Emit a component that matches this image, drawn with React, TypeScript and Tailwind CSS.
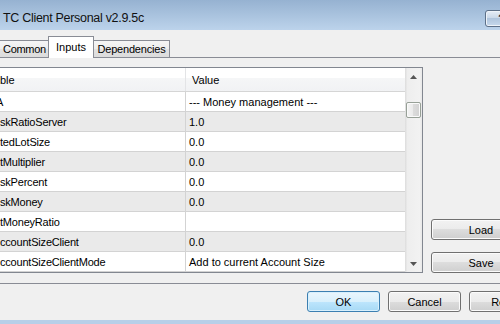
import React from "react";

const rows: [string, string, number?][] = [
  ["A", "--- Money management ---", -4],
  ["skRatioServer", "1.0"],
  ["tedLotSize", "0.0"],
  ["tMultiplier", "0.0"],
  ["skPercent", "0.0"],
  ["skMoney", "0.0"],
  ["tMoneyRatio", ""],
  ["ccountSizeClient", "0.0"],
  ["ccountSizeClientMode", "Add to current Account Size"],
];

function Arrow({ down }: { down?: boolean }) {
  return (
    <svg width="7" height="4" viewBox="0 0 7 4">
      <polygon points={down ? "0,0 7,0 3.5,4" : "0,4 7,4 3.5,0"} fill="#555" />
    </svg>
  );
}

const btn =
  "h-[21px] shrink-0 flex items-center justify-center rounded-[3px] border border-[#707070] shadow-[inset_0_0_0_1px_#fbfbfb] bg-[linear-gradient(to_bottom,#f2f2f2_0%,#ebebeb_50%,#dddddd_50%,#cfcfcf_100%)]";

export default function App() {
  return (
    <div className="w-[500px] h-[324px] overflow-hidden bg-[#f0f0f0] flex flex-col font-['Liberation_Sans',Arial,sans-serif] text-[11px] text-black leading-[14px]">
      {/* title bar */}
      <div className="h-[30px] shrink-0 flex bg-[linear-gradient(to_bottom,#96b2d1,#bcd3eb)]">
        <div className="pl-[3px] pt-[10px] text-[12.5px] tracking-[-0.3px] leading-[16px] whitespace-nowrap text-[#111]">
          TC Client Personal v2.9.5c
        </div>
        <div className="ml-auto mt-[10px] mr-[-30px] w-[45px] h-[17px] shrink-0 rounded-[3px] border border-[#5d7088] bg-[linear-gradient(to_bottom,#e6edf6,#c8d7e8_50%,#b0c5dd_50%,#c6d8ec)] shadow-[inset_0_0_0_1px_#eef3f9] flex items-start pl-[12px] text-[13px] leading-[15px] font-bold text-[#1f2a38]">
          ?
        </div>
      </div>

      {/* tabs */}
      <div className="h-[27px] shrink-0 flex items-end">
        <div className="ml-[-1px] w-[50px] h-[17px] border border-b-0 border-[#898c95] bg-[linear-gradient(to_bottom,#f5f5f5,#ededed_50%,#e2e2e2_50%,#dcdcdc)] flex items-center pl-[3px] whitespace-nowrap tracking-[-0.3px]">
          Common
        </div>
        <div className="relative z-10 ml-[-1px] mb-[-1px] w-[46px] h-[22px] border border-b-0 border-[#898c95] bg-white flex items-start justify-center pt-[3px] whitespace-nowrap">
          Inputs
        </div>
        <div className="ml-[-1px] w-[77px] h-[17px] border border-b-0 border-[#898c95] bg-[linear-gradient(to_bottom,#f5f5f5,#ededed_50%,#e2e2e2_50%,#dcdcdc)] flex items-center justify-center whitespace-nowrap tracking-[-0.2px]">
          Dependencies
        </div>
      </div>

      {/* panel */}
      <div className="h-[227px] shrink-0 border-y border-[#898c95] flex pt-[9px] pb-[10px]">
        {/* grid */}
        <div className="ml-[-1px] w-[424px] h-[206px] shrink-0 border border-[#828790] bg-white flex">
          <div className="flex-1 flex flex-col min-w-0">
            <div className="h-[24px] shrink-0 flex border-b border-[#d5d5d5] bg-[linear-gradient(to_bottom,#ffffff,#ffffff_45%,#f5f6f7_45%,#f1f2f4)]">
              <div className="w-[186px] shrink-0 border-r border-[#e3e4e6] flex items-center whitespace-nowrap overflow-hidden">
                ble
              </div>
              <div className="flex items-center pl-[6px]">Value</div>
            </div>
            {rows.map(([name, value, off], i) => (
              <div
                key={i}
                className={`h-[20px] shrink-0 flex border-b border-[#d3d3d3] ${
                  i % 2 === 1 ? "bg-[#eaeaea]" : "bg-white"
                }`}
              >
                <div className="w-[186px] shrink-0 border-r border-[#d3d3d3] flex items-center whitespace-nowrap overflow-hidden tracking-[-0.2px]">
                  <span style={off ? { marginLeft: off } : undefined}>{name}</span>
                </div>
                <div className="flex items-center pl-[3px] whitespace-nowrap">{value}</div>
              </div>
            ))}
          </div>
          {/* scrollbar */}
          <div className="w-[17px] shrink-0 flex flex-col items-center bg-[linear-gradient(to_right,#dcdcdc,#eeeeee_15%,#f2f2f2_85%,#e8e8e8)]">
            <div className="h-[17px] w-full flex items-center justify-center">
              <Arrow />
            </div>
            <div className="mt-[17px] w-[15px] h-[16px] rounded-[2px] border border-[#97a097] bg-[linear-gradient(to_right,#f4f4f4,#e9e9e9_50%,#dbdbdb_50%,#d2d2d2)] shadow-[inset_0_0_0_1px_#fafafa]" />
            <div className="mt-auto h-[17px] w-full flex items-center justify-center">
              <Arrow down />
            </div>
          </div>
        </div>

        {/* right buttons */}
        <div className="ml-[8px] flex flex-col justify-end gap-[12px]">
          <div className={`${btn} w-[100px]`}>Load</div>
          <div className={`${btn} w-[100px]`}>Save</div>
        </div>
      </div>

      {/* bottom buttons */}
      <div className="flex-1 flex items-start pt-[7px] pl-[307px] gap-[8px]">
        <div className="w-[73px] h-[21px] shrink-0 flex items-center justify-center rounded-[3px] border border-[#3c7fb1] shadow-[inset_0_0_0_1px_#d8f0fd] bg-[linear-gradient(to_bottom,#eaf6fd_0%,#d9f0fc_50%,#bee6fd_50%,#a7d9f5_100%)]">
          OK
        </div>
        <div className={`${btn} w-[73px]`}>Cancel</div>
        <div className={`${btn} w-[73px]`}>Reset</div>
      </div>

      <div className="h-[4px] shrink-0 bg-[#b7cfe8]" />
    </div>
  );
}
